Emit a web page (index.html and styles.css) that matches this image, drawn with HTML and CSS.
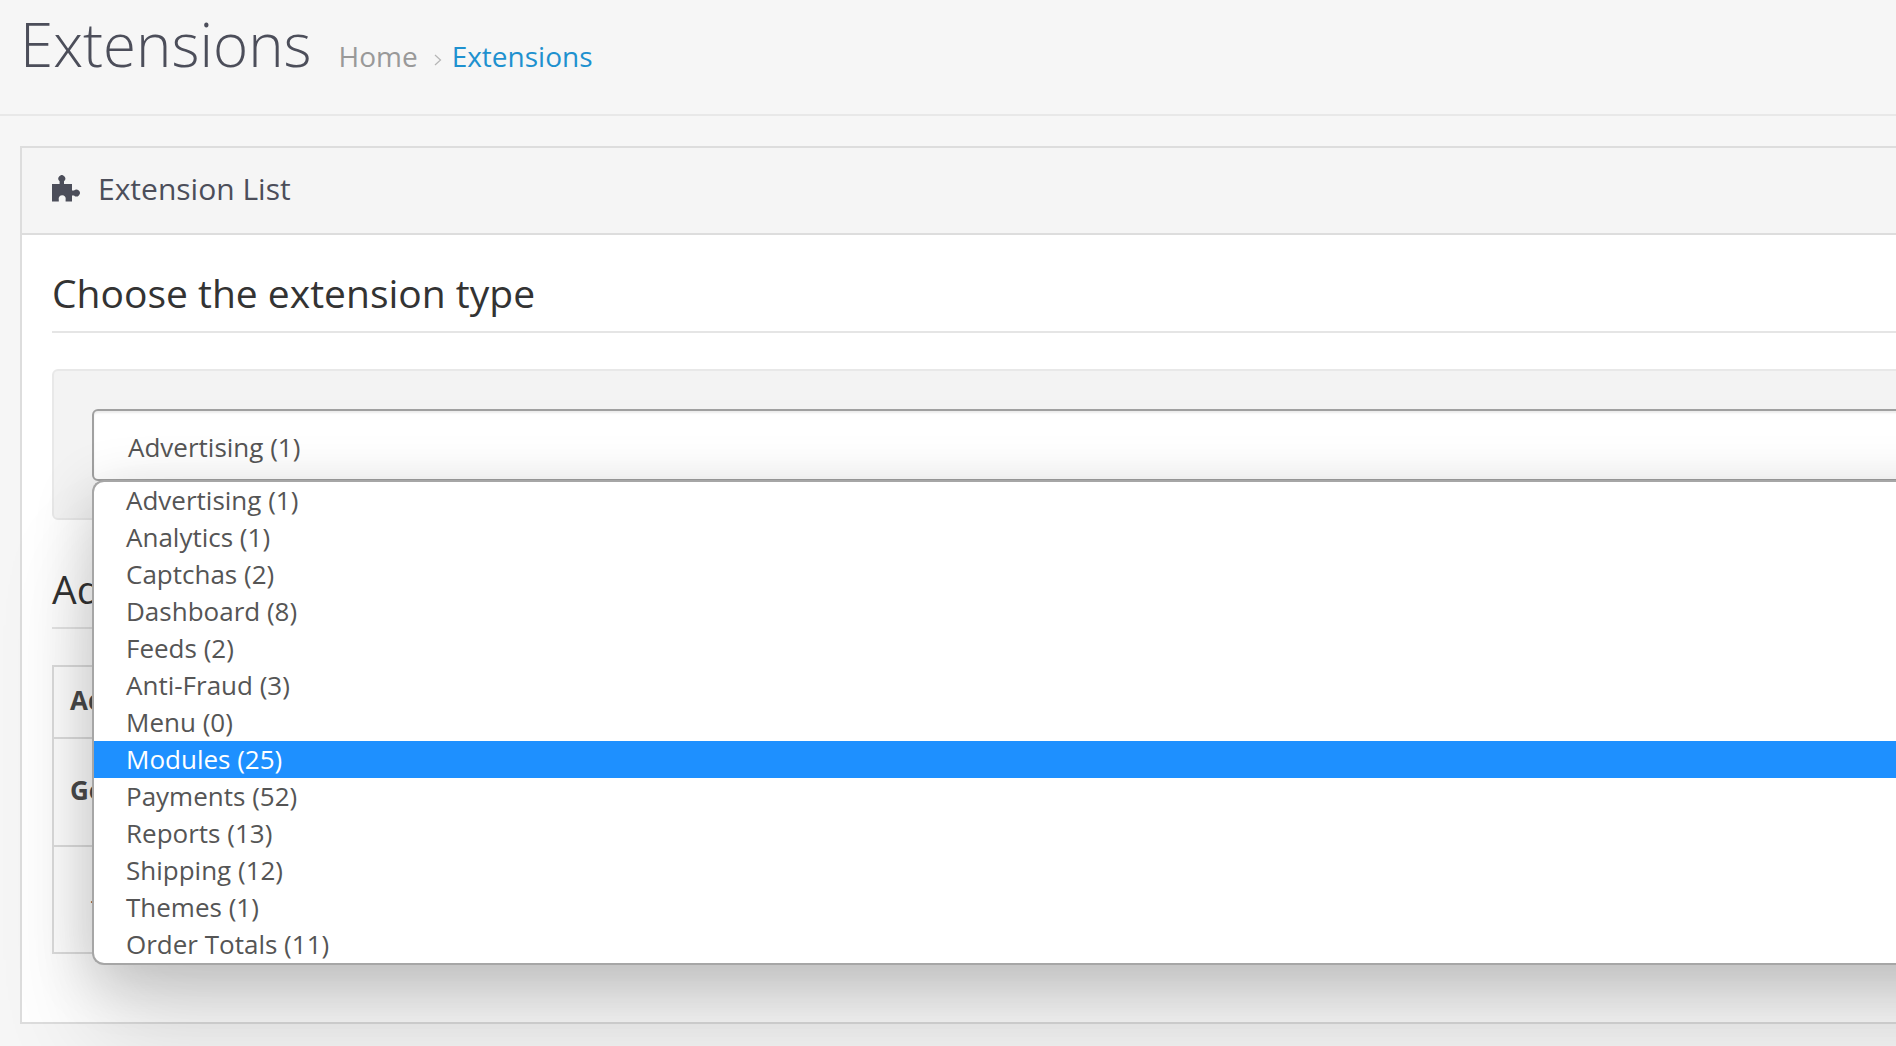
FILE: index.html
```html
<!DOCTYPE html>
<html lang="en">
<head>
<meta charset="utf-8">
<title>Extensions</title>
<link rel="stylesheet" href="styles.css">
</head>
<body>
<div class="page">
  <header class="page-header">
    <h1 class="page-title">Extensions</h1>
    <nav class="breadcrumb">
      <a class="crumb">Home</a>
      <svg class="crumb-sep" width="8" height="12" viewBox="0 0 8 12"><polyline points="1,1 6.5,6 1,11" fill="none" stroke="#b5b5b5" stroke-width="1.2"/></svg>
      <a class="crumb crumb-active">Extensions</a>
    </nav>
  </header>
  <main class="container">
    <section class="panel">
      <div class="panel-heading">
        <svg class="panel-icon" width="28" height="27" viewBox="0 0 28 27"><path fill="#4c4e5a" d="M0 9H7.6V6.2a3.4 3.4 0 1 1 4.4 0V9H20V15.6H22a3.4 3.4 0 1 1 0 4.8H20V26.5H13.6V24.6a3.5 3.5 0 1 0-6.8 0V26.5H0Z"/></svg>
        <span class="panel-title">Extension List</span>
      </div>
      <div class="panel-body">
        <h3 class="section-title section-first">Choose the extension type</h3>
        <div class="well">
          <div class="select-wrap">
            <div class="select-box">Advertising (1)</div>
            <ul class="select-menu">
              <li>Advertising (1)</li>
              <li>Analytics (1)</li>
              <li>Captchas (2)</li>
              <li>Dashboard (8)</li>
              <li>Feeds (2)</li>
              <li>Anti-Fraud (3)</li>
              <li>Menu (0)</li>
              <li class="is-selected">Modules (25)</li>
              <li>Payments (52)</li>
              <li>Reports (13)</li>
              <li>Shipping (12)</li>
              <li>Themes (1)</li>
              <li>Order Totals (11)</li>
            </ul>
          </div>
        </div>
        <h3 class="section-title section-second">Advertising List</h3>
        <table class="list-table">
          <tr class="row-head"><th>Advertising Name</th></tr>
          <tr class="row-body"><th>Google Shopping</th></tr>
          <tr class="row-last"><td>&nbsp;&nbsp;&nbsp;- Your Store</td></tr>
        </table>
      </div>
    </section>
  </main>
</div>
</body>
</html>
```
FILE: styles.css
```css
* { box-sizing: border-box; }
html, body { margin: 0; padding: 0; height: 1046px; overflow: hidden; background: #f6f6f6; }
body { font-family: "Open Sans", sans-serif; color: #555; }
.page { width: 1896px; height: 1046px; overflow: hidden; }

.page-header {
  height: 116px; width: 100%;
  border-bottom: 2px solid #e8e8e8;
  padding-left: 20px;
  display: flex; align-items: flex-start;
}
.page-title {
  margin: 0; padding-top: 3px;
  font-size: 60px; font-weight: 300; line-height: 82px; color: #4c4e5a;
}
.breadcrumb {
  margin-left: 27px; padding-top: 37px;
  display: flex; align-items: center;
  font-size: 28px; line-height: 38px;
}
.crumb { color: #999; }
.crumb-active { color: #1e91cf; }
.crumb-sep { margin: 8px 10px 0 16px; }

.container { width: 2300px; padding: 30px 0 0 20px; }
.panel { border: 2px solid #ddd; background: #fff; height: 878px; }
.panel-heading {
  height: 87px; background: #f5f5f5; border-bottom: 2px solid #ddd;
  padding: 0 0 4px 30px; display: flex; align-items: center;
}
.panel-title { margin-left: 18px; font-size: 30px; color: #4c4e5a; }
.panel-body { padding: 0 30px; }

.section-title {
  margin: 0; font-weight: 400; font-size: 39px; line-height: 54px; color: #333;
  border-bottom: 2px solid #e5e5e5;
}
.section-first { padding: 31px 0 11px; margin-bottom: 36px; }
.section-second { padding: 42px 0 11px; margin-bottom: 36px; }

.well {
  border: 2px solid #e8e8e8; border-radius: 6px; background: #f3f3f3;
  padding: 38px 38px 37px;
}
.select-wrap { position: relative; }
.select-box {
  height: 72px; padding: 0 34px; line-height: 72px;
  font-size: 26px; color: #555; background: #fff;
  border: 2px solid #a0a0a0; border-radius: 6px;
  box-shadow: inset 0 2px 2px rgba(0,0,0,.075);
}
.select-menu {
  position: absolute; left: 0; right: 0; top: 71px; z-index: 5;
  margin: 0; padding: 0; list-style: none;
  background: #fff; border: 2px solid #a6a6a6; border-right: 0;
  border-radius: 12px 0 0 12px;
  height: 485px; overflow: hidden;
  box-shadow: 0 70px 100px rgba(0,0,0,.12), 0 14px 60px rgba(0,0,0,.19);
  font-size: 26px;
}
.select-menu li { height: 37px; line-height: 36px; padding-left: 32px; color: #555; }
.select-menu .is-selected { background: #1e90ff; color: #fff; }

.list-table { width: 100%; border-collapse: collapse; font-size: 26px; color: #4a4a4a; }
.list-table th, .list-table td { border: 2px solid #ddd; padding: 0 16px 4px; text-align: left; }
.list-table td { padding-bottom: 1px; }
.row-head { height: 72px; }
.row-body { height: 108px; }
.row-last { height: 107px; }
```
